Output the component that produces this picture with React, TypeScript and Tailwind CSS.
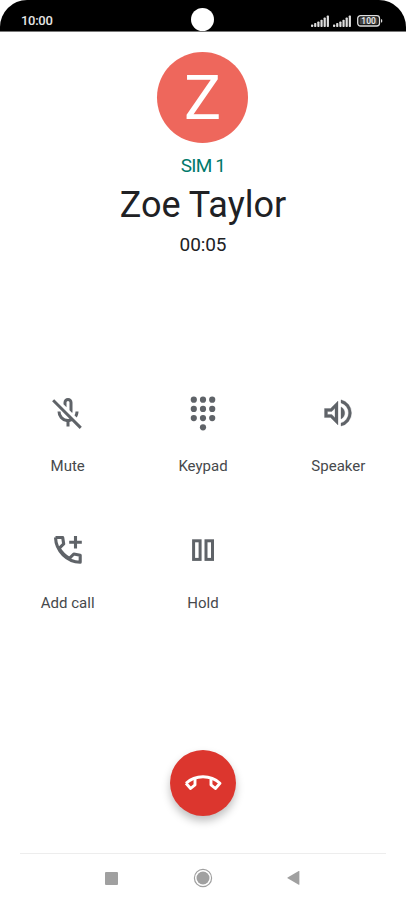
import React from 'react';

const MATERIAL_BOX = '0 -960 960 960';

const MuteIcon = () => (
  <svg viewBox={MATERIAL_BOX} className="w-9 h-9" fill="currentColor">
    <path d="m710-362-58-58q14-23 21-48t7-52h80q0 44-13 83.5T710-362ZM480-594Zm112 112-72-72v-206q0-17-11.5-28.5T480-800q-17 0-28.5 11.5T440-760v126l-80-80v-46q0-50 35-85t85-35q50 0 85 35t35 85v240q0 11-2.5 20t-5.5 18ZM440-120v-123q-104-14-172-93t-68-184h80q0 83 57.5 141.5T480-320q34 0 64.5-10.5T600-360l57 57q-29 23-63.5 39T520-243v123h-80Zm352 64L56-792l56-56 736 736-56 56Z" />
  </svg>
);

const KeypadIcon = () => (
  <svg viewBox="0 0 36 36" className="w-9 h-9" fill="currentColor">
    {[4.7, 13.9, 23.1].map((y) =>
      [8.8, 18, 27.2].map((x) => <circle key={`${x}-${y}`} cx={x} cy={y} r="3.1" />)
    )}
    <circle cx="18" cy="32.3" r="3.1" />
  </svg>
);

const SpeakerIcon = () => (
  <svg viewBox={MATERIAL_BOX} className="w-9 h-9" fill="currentColor" stroke="currentColor" strokeWidth="8">
    <path d="M560-131v-82q90-26 145-100t55-168q0-94-55-168T560-749v-82q124 28 202 125.5T840-481q0 127-78 224.5T560-131ZM120-360v-240h160l200-200v640L280-360H120Zm440 40v-322q47 22 73.5 66t26.5 96q0 51-26.5 94.5T560-320ZM400-606l-86 86H200v80h114l86 86v-252Z" />
  </svg>
);

const AddCallIcon = () => (
  <svg viewBox="0 0 36 36" className="w-9 h-9" fill="none" stroke="currentColor" strokeWidth="3.1" strokeLinejoin="round">
    <path d="M5.5 5.5h7.2l1 6.4-4.6 4.4" />
    <path d="M5.5 5.5C6 19 17 30 30.2 30.2v-7l-6.4-1.2-4.4 4.4" />
    <path d="M9.1 16.3q3.8 6.4 10.3 10.1" />
    <path d="M25.5 4v12.6M19.2 10.3h12.6" />
  </svg>
);

const HoldIcon = () => (
  <svg viewBox="0 0 36 36" className="w-9 h-9" fill="none" stroke="currentColor" strokeWidth="3">
    <rect x="8.6" y="8.8" width="6.5" height="18.6" />
    <rect x="21" y="8.8" width="6.5" height="18.6" />
  </svg>
);

const HangUpIcon = () => (
  <svg viewBox="0 0 40 40" className="w-10 h-10" fill="none" stroke="currentColor" strokeWidth="2.9" strokeLinejoin="round">
    <path d="M3 20.2C12.5 11.6 27.5 11.6 37 20.2l-4.6 5.3-4.4-3.6v-6" />
    <path d="M3 20.2l4.6 5.3 4.4-3.6v-6" />
  </svg>
);

const Signal = () => (
  <svg viewBox="0 0 18 12" className="w-[18px] h-3" fill="#dedede">
    {[2.5, 4, 5.5, 7.3, 9.5, 11.5].map((h, i) => (
      <rect key={i} x={i * 3.15} y={12 - h} width="2.2" height={h} rx="0.7" />
    ))}
  </svg>
);

const actions = [
  { label: 'Mute', icon: <MuteIcon /> },
  { label: 'Keypad', icon: <KeypadIcon /> },
  { label: 'Speaker', icon: <SpeakerIcon /> },
  { label: 'Add call', icon: <AddCallIcon /> },
  { label: 'Hold', icon: <HoldIcon /> },
];

export default function App() {
  return (
    <div className="w-[406px] h-[902px] bg-white flex flex-col overflow-hidden font-['Roboto',sans-serif] text-[#202124]">
      <header className="h-8 shrink-0 bg-black border-b border-[#777] rounded-t-[27px] grid grid-cols-3 text-[#e6e6e6]">
        <span className="pl-[21px] pt-[13px] text-[13px] leading-4 font-medium tracking-[-0.3px]">10:00</span>
        <div className="w-[23px] h-[23px] mt-2 rounded-full bg-white justify-self-center" />
        <div className="flex items-start justify-end gap-[4.5px] pr-[23px] pt-[15px]">
          <Signal />
          <Signal />
          <svg viewBox="0 0 26 12" className="w-[26px] h-3 ml-px">
            <rect x="0.7" y="0.7" width="21.8" height="10.3" rx="2.8" fill="#111" stroke="#dedede" strokeWidth="1.3" />
            <rect x="2.7" y="2.4" width="17.8" height="6.9" rx="1" fill="#444" />
            <path d="M24 4.2h.5q.7 0 .7.7v1.9q0 .7-.7.7H24Z" fill="#dedede" />
            <text x="11.6" y="8.9" textAnchor="middle" fontSize="8.5" fontWeight="500" fill="#eee">100</text>
          </svg>
        </div>
      </header>

      <section className="h-[342px] shrink-0 flex flex-col items-center pt-5">
        <div className="w-[91px] h-[91px] mr-px rounded-full bg-[#ee675c] text-white text-[62px] flex items-center justify-center">
          <span className="leading-none">Z</span>
        </div>
        <span className="mt-[11px] text-[19px] leading-6 tracking-[-0.8px] word-spacing-[1px] text-[#00796b]">SIM 1</span>
        <h1 className="mt-[5px] text-[36px] leading-[44px] whitespace-nowrap">Zoe Taylor</h1>
        <span className="mt-[6px] text-[19px] leading-6 tracking-[-0.1px]">00:05</span>
      </section>

      <section className="h-[376px] shrink-0 grid grid-cols-3 auto-rows-[136.5px] content-start pt-[21px]">
        {actions.map((action) => (
          <button key={action.label} className="flex flex-col items-center justify-start text-[#5f6368]">
            {action.icon}
            <span className="mt-[25px] text-[15px] leading-5 text-[#46494c]">{action.label}</span>
          </button>
        ))}
      </section>

      <div className="h-[103px] shrink-0 flex justify-center">
        <button className="w-[66px] h-[66px] rounded-full bg-[#dc362e] text-white flex items-center justify-center shadow-[0_5px_9px_rgba(0,0,0,0.25)]">
          <HangUpIcon />
        </button>
      </div>

      <nav className="mx-5 h-[49px] border-t border-[#ededed] grid grid-cols-3 text-[#a0a0a0]">
        <div className="flex justify-end pr-[24px] pt-[17.5px]">
          <div className="w-[13px] h-[13px] bg-[#a0a0a0] rounded-[1px] mr-[0.5px]" />
        </div>
        <div className="flex justify-center pt-[14px]">
          <svg viewBox="0 0 20 20" className="w-5 h-5">
            <circle cx="10" cy="10" r="8.6" fill="none" stroke="currentColor" strokeWidth="1.2" />
            <circle cx="10" cy="10" r="6.5" fill="currentColor" />
          </svg>
        </div>
        <div className="flex pl-[23px] pt-[17px]">
          <svg viewBox="0 0 13 14" className="w-[13px] h-3.5" fill="currentColor">
            <path d="M.6 6.5 11.7.1q.7-.3.7.5v12.6q0 .8-.7.5L.6 7.3Q0 6.9.6 6.5Z" />
          </svg>
        </div>
      </nav>
    </div>
  );
}
